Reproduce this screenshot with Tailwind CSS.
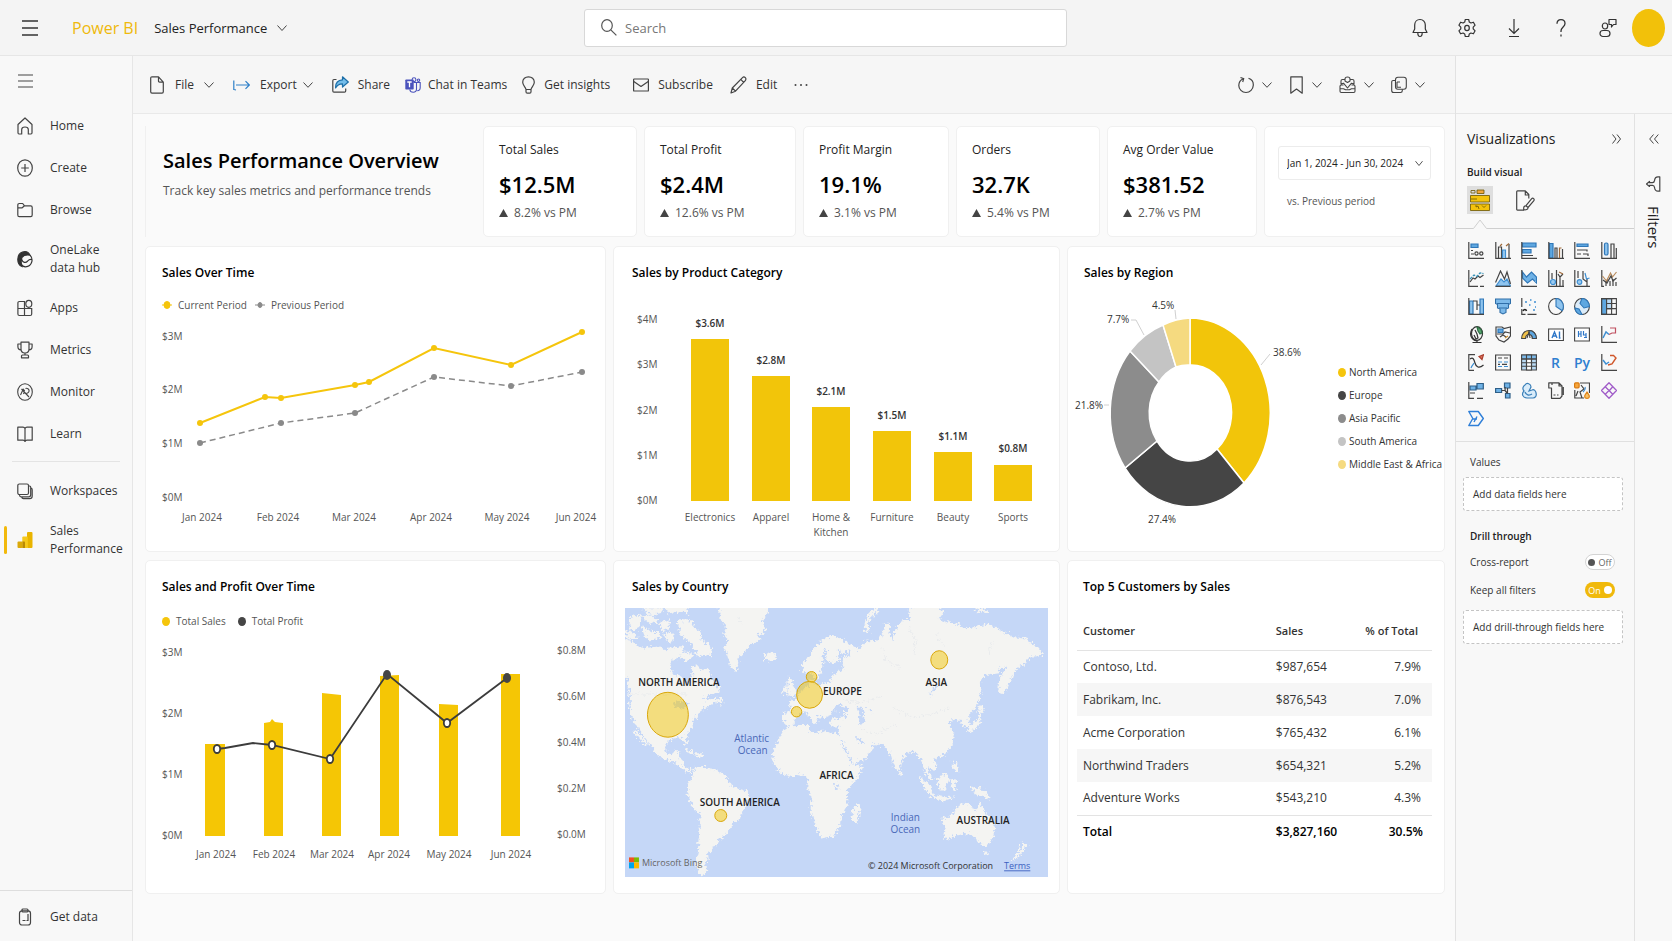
<!DOCTYPE html>
<html lang="en">
<head>
    <meta charset="UTF-8">
    <meta name="viewport" content="width=device-width, initial-scale=1.0">
    <title>Sales Performance - Power BI</title>
    <script src="https://cdn.jsdelivr.net/npm/@tailwindcss/browser@4"></script>
</head>
<body class="min-h-screen flex flex-col bg-[#fafafa] text-[#333] text-[12px] leading-5 font-['Open_Sans','Noto_Sans',sans-serif]">

    <!-- Top bar -->
    <header class="h-14 shrink-0 grid grid-cols-[584fr_483fr_605fr] items-center bg-[#f4f4f4] border-b border-[#e6e6e6]">
        <div class="flex items-center pl-[22px]">
            <button aria-label="App launcher">
                <svg class="w-4 h-4" viewBox="0 0 16 16" fill="none" stroke="#333" stroke-width="1.3"><path d="M0 1h16M0 8h16M0 15h16"/></svg>
            </button>
            <a href="#" class="ml-[34px] text-[16px] font-medium text-[#efb90b]">Power BI</a>
            <button class="ml-4 flex items-center gap-2.5 text-[13px] text-[#222]">
                Sales Performance
                <svg class="w-2.5 h-2" viewBox="0 0 10 8" fill="none" stroke="#444"><path d="M.5 1.5 5 6.5 9.5 1.5"/></svg>
            </button>
        </div>
        <div class="flex items-center h-[38px] px-4 gap-2 bg-white border border-[#d8d8d8] rounded-[3px]">
            <svg class="w-4 h-[17px] shrink-0" viewBox="0 0 16 17" fill="none" stroke="#555" stroke-width="1.2"><ellipse cx="6" cy="6.5" rx="5.3" ry="5.8"/><path d="m9.8 10.8 5.6 5.6"/></svg>
            <input type="search" aria-label="Search" placeholder="Search" class="w-full h-9 text-[13px] outline-none placeholder:text-[#777]">
        </div>
        <div class="flex items-center justify-end gap-[29px] pr-[7px]">
            <button aria-label="Notifications"><svg class="w-[18px] h-5" viewBox="0 0 18 20" fill="none" stroke="#333" stroke-width="1.2" stroke-linejoin="round"><path d="M9 1.5c-3.2 0-5.3 2.4-5.3 5.5v4L2 14.5h14L14.3 11V7c0-3.1-2.1-5.500-5.300-5.500zM6.800 14.800c0 2.400 1 3.700 2.200 3.700s2.200-1.300 2.200-3.700"/></svg></button>
            <button aria-label="Settings"><svg class="w-[18px] h-5" viewBox="0 0 18 20" fill="none" stroke="#333" stroke-width="1.2" stroke-linejoin="round"><path d="M7.300 1.500h3.400l.6 2.600 1.600.9 2.500-.8 1.700 3-1.900 1.900v1.800l1.900 1.900-1.700 3-2.500-.8-1.600.9-.6 2.600H7.300l-.6-2.600-1.600-.9-2.500.8-1.700-3 1.900-1.900V9.100L.9 7.200l1.700-3 2.500.8 1.600-.9z"/><ellipse cx="9" cy="10" rx="2.300" ry="2.600"/></svg></button>
            <button aria-label="Download"><svg class="w-[18px] h-5" viewBox="0 0 18 20" fill="none" stroke="#333" stroke-width="1.2"><path d="M9 1v14M4 10.500 9 15.500l5-5M4 18.500h10"/></svg></button>
            <button aria-label="Help"><svg class="w-[18px] h-5" viewBox="0 0 18 20" fill="none" stroke="#333" stroke-width="1.3"><path d="M5 5.800C5 3 6.700 1.600 9 1.600s4 1.500 4 3.900c0 3.300-4 3.700-4 7.500v1"/><path d="M9 16.500v2"/></svg></button>
            <button aria-label="Feedback"><svg class="w-[18px] h-5" viewBox="0 0 18 20" fill="none" stroke="#333" stroke-width="1.2"><ellipse cx="6" cy="8" rx="2.700" ry="3"/><rect x="1" y="12.500" width="10" height="6" rx="3"/><path d="M10 1.500h7v5h-2.500L12.500 9V6.500H10z" stroke-linejoin="round"/></svg></button>
            <button aria-label="Account" class="-ml-3.5 w-[33px] h-[38px] rounded-[50%] bg-[#f2c10a]"></button>
        </div>
    </header>

    <div class="grow flex">
        <!-- Left navigation -->
        <nav class="w-[133px] shrink-0 flex flex-col bg-[#f8f8f8] border-r border-[#e6e6e6]">
            <button aria-label="Collapse navigation" class="h-[49px] pl-[18px]">
                <svg class="w-[15px] h-3.5" viewBox="0 0 15 14" fill="none" stroke="#444" stroke-width="1.2"><path d="M0 1h15M0 7h15M0 13h15"/></svg>
            </button>
            <a href="#" class="h-[42px] flex items-center gap-[17px] pl-[17px]">
                <svg class="w-4 h-[18px]" viewBox="0 0 16 18" fill="none" stroke="#444" stroke-width="1.2" stroke-linejoin="round"><path d="M1 7.500 8 1l7 6.500v8.300c0 .7-.4 1.200-1 1.200h-2.700v-4.500c0-1.500-1.200-2.500-3.300-2.500s-3.300 1-3.300 2.500V17H2c-.6 0-1-.5-1-1.200z"/></svg>
                Home
            </a>
            <a href="#" class="h-[42px] flex items-center gap-[17px] pl-[17px]">
                <svg class="w-4 h-[18px]" viewBox="0 0 16 18" fill="none" stroke="#444" stroke-width="1.2"><ellipse cx="8" cy="9" rx="7.300" ry="8.200"/><path d="M8 5v8M4.200 9h7.600"/></svg>
                Create
            </a>
            <a href="#" class="h-[42px] flex items-center gap-[17px] pl-[17px]">
                <svg class="w-4 h-[18px]" viewBox="0 0 16 18" fill="none" stroke="#444" stroke-width="1.2" stroke-linejoin="round"><path d="M.8 4.200c0-1 .6-1.700 1.500-1.700h3.400l1.800 2.300h6.200c.9 0 1.500.6 1.500 1.600v7.500c0 1-.6 1.700-1.500 1.700H2.300c-.9 0-1.500-.7-1.500-1.700zM.8 6.800h4.400l2.300-2"/></svg>
                Browse
            </a>
            <a href="#" class="h-14 flex items-center gap-[17px] pl-[17px] leading-[18px]">
                <svg class="w-4 h-[18px] shrink-0" viewBox="0 0 16 18" fill="none" stroke="#333" stroke-width="1.2"><path d="M8 1.500C3.500 2 .8 5 .8 9.500c0 3.500 1.600 6 4.200 7C3.800 13 3.500 10 5 7.500c1.400-2 4.500-3 8-2.300C12 3 10.500 1.500 8 1.500z" fill="#333"/><path d="M13 5.200c3.500 3.500 2.500 11.300-4.500 11.600-4 0-5.800-4-3.800-7.500 1 3.500 4 4 6 1.700 1.200-1.500 2.500-2 4.500-1.500"/></svg>
                <span>OneLake<br>data hub</span>
            </a>
            <a href="#" class="h-[42px] flex items-center gap-[17px] pl-[17px]">
                <svg class="w-4 h-[18px]" viewBox="0 0 16 18" fill="none" stroke="#444" stroke-width="1.2"><path d="M7.500 16.500V2.500h-5C1.400 2.500.9 3.200.9 4v11c0 .9.500 1.500 1.500 1.500h10.800c.9 0 1.500-.6 1.500-1.500V9.500H.9M7.500 4"/><ellipse cx="11.800" cy="4.800" rx="3" ry="3.500"/></svg>
                Apps
            </a>
            <a href="#" class="h-[42px] flex items-center gap-[17px] pl-[17px]">
                <svg class="w-4 h-[18px]" viewBox="0 0 16 18" fill="none" stroke="#444" stroke-width="1.2" stroke-linejoin="round"><path d="M4 1.200h8V8c0 2.500-1.500 4-4 4S4 10.500 4 8zM4 3H.9v2.500C.9 7.500 2 8.800 4 8.800M12 3h3.100v2.500c0 2-1.100 3.300-3.100 3.300M8 12v2M4.500 16.800V15c0-.6.4-1 1-1h5c.6 0 1 .4 1 1v1.800z"/></svg>
                Metrics
            </a>
            <a href="#" class="h-[42px] flex items-center gap-[17px] pl-[17px]">
                <svg class="w-4 h-[18px]" viewBox="0 0 16 18" fill="none" stroke="#444" stroke-width="1.1"><ellipse cx="8" cy="9" rx="7.300" ry="8.200"/><path d="m3.500 12 2.700-5.800 1.600 1.600M4.500 6l7.500 8M8.500 5.500c1.700-.6 3.600.4 3.600 2.200S10.500 10.300 9.600 10M6.500 11l1-2.500"/></svg>
                Monitor
            </a>
            <a href="#" class="h-[42px] flex items-center gap-[17px] pl-[17px]">
                <svg class="w-4 h-[18px]" viewBox="0 0 16 18" fill="none" stroke="#444" stroke-width="1.2" stroke-linejoin="round"><path d="M8 3.500v12M8 3.500C7.600 2.600 7 2.200 6 2.200H.8v13H6c1 0 1.600.4 2 1.300.4-.9 1-1.300 2-1.300h5.200v-13H10c-1 0-1.600.4-2 1.300z"/></svg>
                Learn
            </a>
            <hr class="mt-1.5 mb-2 mx-3 border-[#e4e4e4]">
            <a href="#" class="h-[42px] flex items-center gap-[17px] pl-[17px]">
                <svg class="w-4 h-[18px]" viewBox="0 0 16 18" fill="none" stroke="#444" stroke-width="1.2"><rect x=".8" y="2" width="10.700" height="10.500" rx="1.500"/><path d="M11.500 4h1c.8 0 1.200.5 1.200 1.300v7.500c0 1.200-.8 2-2 2H4c-.9 0-1.400-.6-1.500-1.800M13.700 6.200c1 0 1.500.6 1.500 1.500V14c0 1.600-1 2.700-2.500 2.700H6.500c-1 0-1.600-.6-1.700-1.600"/></svg>
                Workspaces
            </a>
            <a href="#" aria-current="page" class="h-14 flex items-center leading-[18px]">
                <span class="ml-1 w-[3px] h-7 rounded-sm bg-[#f2b90c]"></span>
                <svg class="ml-2.5 w-4 h-[18px] shrink-0" viewBox="0 0 16 18"><rect x="10" y="1" width="5.500" height="16" rx="1" fill="#e9b400"/><rect x="5.300" y="5.500" width="5.500" height="11.500" rx="1" fill="#f6c91c"/><path d="M5.300 10.500h2c.4 0 .7.300.7.700V17H5.300z" fill="#b98a05"/><rect x=".5" y="10.500" width="5" height="6.500" rx="1" fill="#dba90a"/></svg>
                <span class="ml-[17px]">Sales<br>Performance</span>
            </a>
            <a href="#" class="mt-auto h-[52px] flex items-center gap-[17px] pl-[17px] border-t border-[#dedede]">
                <svg class="w-4 h-[18px]" viewBox="0 0 16 18" fill="none" stroke="#444" stroke-width="1.2"><rect x="2.500" y="2.800" width="11" height="14.200" rx="2.500"/><rect x="5" y="1" width="6" height="3" rx="1"/><path d="M11 6v6.500H9.500M5.500 12.500h3"/></svg>
                Get data
            </a>
        </nav>

        <main class="grow min-w-0 flex flex-col">
            <!-- Report toolbar -->
            <div class="h-[58px] shrink-0 flex items-center bg-[#f6f6f6] border-b border-[#e9e9e9] pl-[17px] pr-[30px]">
                <button class="flex items-center">
                    <svg class="w-3.5 h-[18px]" viewBox="0 0 14 18" fill="none" stroke="#444" stroke-width="1.2" stroke-linejoin="round"><path d="M8.500.8H2C1.200.8.7 1.300.7 2.200v13.600c0 .9.500 1.400 1.300 1.400h10c.8 0 1.300-.5 1.300-1.400V6.200zM8.500.8v4.200c0 .8.400 1.200 1.200 1.200h3.600"/></svg>
                    <span class="ml-[11px]">File</span>
                    <svg class="ml-2.5 w-2.5 h-2" viewBox="0 0 10 8" fill="none" stroke="#444"><path d="M.5 1.500 5 6.300 9.500 1.500"/></svg>
                </button>
                <button class="ml-[19px] flex items-center">
                    <svg class="w-[17px] h-3.5" viewBox="0 0 17 14" fill="none" stroke="#2f80c8" stroke-width="1.2"><path d="M.8 2.500v9.500M3 7h13M12.500 3.200 16.300 7l-3.800 3.800M1 11.500l2 .5"/></svg>
                    <span class="ml-2.5">Export</span>
                    <svg class="ml-1.5 w-2.5 h-2" viewBox="0 0 10 8" fill="none" stroke="#444"><path d="M.5 1.500 5 6.300 9.500 1.500"/></svg>
                </button>
                <button class="ml-[19px] flex items-center gap-[9px]">
                    <svg class="w-[17px] h-[17px]" viewBox="0 0 17 17" fill="none" stroke="#444" stroke-width="1.2" stroke-linejoin="round"><path d="M4.500 3.500H2c-.8 0-1.200.4-1.200 1.200V15c0 .8.400 1.200 1.200 1.200h10.500c.8 0 1.200-.4 1.200-1.200v-2.500"/><path d="M10.500.8 16.300 6l-5.800 5V7.800C7 7.800 5 9 3.600 12c-.2-4.800 2.400-8 6.900-8.200z" fill="#74bdea" stroke="#1d6fa8"/></svg>
                    Share
                </button>
                <button class="ml-[15px] flex items-center gap-[7px]">
                    <svg class="w-4 h-4" viewBox="0 0 16 16" fill="none" stroke="#4b53bc" stroke-width="1.1"><path d="M8.500 5.500h6.700v5c0 2-1.200 3.200-3 3.200M11.500 5.500v6.500c0 2-1.500 3.200-3.300 3.200S5 14 4.800 12.500"/><circle cx="9" cy="2.700" r="1.900"/><circle cx="13.500" cy="3.200" r="1.200"/><rect x=".3" y="2.500" width="8.400" height="10" rx=".8" fill="#4b53bc" stroke="none"/><path d="M2.300 5h4.400M4.500 5v5.300" stroke="#fff" stroke-width="1.3"/></svg>
                    Chat in Teams
                </button>
                <button class="ml-[15px] flex items-center gap-[9px]">
                    <svg class="w-[13px] h-[18px]" viewBox="0 0 13 18" fill="none" stroke="#444" stroke-width="1.2"><path d="M4 13.500c-.3-2.500-3.300-4-3.300-7.300C.7 3 3.200.8 6.500.8s5.800 2.200 5.800 5.400c0 3.300-3 4.800-3.300 7.300zM4 13.500v2.200c0 .9.500 1.500 1.300 1.500h2.400c.8 0 1.300-.6 1.300-1.500v-2.200"/></svg>
                    Get insights
                </button>
                <button class="ml-[23px] flex items-center gap-[9px]">
                    <svg class="w-4 h-3.5" viewBox="0 0 16 14" fill="none" stroke="#444" stroke-width="1.2" stroke-linejoin="round"><rect x=".6" y="1" width="14.800" height="12" rx=".6"/><path d="m.8 3.500 7.200 5 7.200-5"/></svg>
                    Subscribe
                </button>
                <button class="ml-[17px] flex items-center gap-[9px]">
                    <svg class="w-[17px] h-[18px]" viewBox="0 0 17 18" fill="none" stroke="#444" stroke-width="1.2" stroke-linejoin="round"><path d="M1 17l1.300-5L12.500 1.600c.8-.8 2-.8 2.800 0s.8 2.200 0 3L5.500 15.200zM10.800 3.400l2.800 3M2.300 12l3.200 3.200"/></svg>
                    Edit
                </button>
                <button aria-label="More options" class="ml-[17px]"><svg class="w-3.5 h-1" viewBox="0 0 14 4" fill="#444"><circle cx="1.500" cy="2" r="1"/><circle cx="7" cy="2" r="1"/><circle cx="12.500" cy="2" r="1"/></svg></button>

                <div class="ml-auto flex items-center gap-[17px]">
                    <button aria-label="Reset" class="flex items-center gap-2">
                        <svg class="w-4 h-[18px]" viewBox="0 0 16 18" fill="none" stroke="#444" stroke-width="1.2"><path d="M10.500 2.300c3 1 5 3.700 4.800 7-.2 4-3.300 7.200-7.300 7.200S.8 13.300.8 9.500C.8 6.500 2.500 4 5.300 2.800M2.500 1.500l3.200 1.200-1 3.300"/></svg>
                        <svg class="w-2.5 h-2" viewBox="0 0 10 8" fill="none" stroke="#444"><path d="M.5 1.500 5 6.300 9.500 1.500"/></svg>
                    </button>
                    <button aria-label="Bookmarks" class="flex items-center gap-2">
                        <svg class="w-[15px] h-[18px]" viewBox="0 0 15 18" fill="none" stroke="#444" stroke-width="1.2" stroke-linejoin="round"><path d="M1.800.8h11.400v16.400L7.500 13l-5.700 4.200z"/></svg>
                        <svg class="w-2.5 h-2" viewBox="0 0 10 8" fill="none" stroke="#444"><path d="M.5 1.500 5 6.300 9.500 1.500"/></svg>
                    </button>
                    <button aria-label="View" class="flex items-center gap-2">
                        <svg class="w-[17px] h-[18px]" viewBox="0 0 17 18" fill="none" stroke="#444" stroke-width="1.1" stroke-linejoin="round"><path d="M6 3.500H3.500c-1 0-1.500.5-1.500 1.500v3l2.500-.8L8.500 12l4-4.800L15 8V5c0-1-.5-1.500-1.500-1.500H11M4.500 9H2.300C1.400 9 1 9.500 1 10.300v5c0 .8.400 1.200 1.300 1.200h12.400c.9 0 1.300-.4 1.300-1.200v-5c0-.8-.4-1.300-1.300-1.300h-2.200M1 12.800h3.500l2 1h4l2-1H16M6 5V3c0-1.300 1-2 2.500-2S11 1.700 11 3v2l-2.500 1.500z"/></svg>
                        <svg class="w-2.5 h-2" viewBox="0 0 10 8" fill="none" stroke="#444"><path d="M.5 1.500 5 6.300 9.500 1.500"/></svg>
                    </button>
                    <button aria-label="Copy" class="flex items-center gap-2">
                        <svg class="w-4 h-[18px]" viewBox="0 0 16 18" fill="none" stroke="#444" stroke-width="1.1"><rect x="4.500" y="1.300" width="10.800" height="12" rx="2.500"/><path d="M4.500 4.500H2.200C1.300 4.500.7 5.100.7 6v8.500c0 1.200.8 2 1.900 2h7c1 0 1.700-.7 1.700-1.700v-1.500M6 6h3M6 6v5.300h4"/></svg>
                        <svg class="w-2.5 h-2" viewBox="0 0 10 8" fill="none" stroke="#444"><path d="M.5 1.500 5 6.300 9.500 1.500"/></svg>
                    </button>
                </div>
            </div>

            <div class="pl-3 pr-2.5 pt-3 pb-12 flex flex-col gap-2">
                <!-- KPI row -->
                <section class="grid grid-cols-[331fr_154fr_152fr_146fr_144fr_150fr_181fr] gap-[7px] mb-px">
                    <div class="pl-[17px] pt-[21px] border-l border-[#f0f0f0]">
                        <h1 class="text-[20px] leading-7 font-semibold text-black whitespace-nowrap">Sales Performance Overview</h1>
                        <p class="mt-1.5 text-[#555] whitespace-nowrap">Track key sales metrics and performance trends</p>
                    </div>
                    <div class="px-[15px] py-[13px] bg-white border border-[#f0f0f0] rounded-[5px]">
                        <h2 class="text-[#222] whitespace-nowrap">Total Sales</h2>
                        <p class="mt-2 text-[22px] leading-8 font-semibold text-black">$12.5M</p>
                        <p class="mt-[3px] flex items-center gap-1.5 text-[#555] whitespace-nowrap"><svg class="w-[9px] h-2" viewBox="0 0 9 8" fill="#444"><path d="M4.500 0 9 8H0z"/></svg>8.2% vs PM</p>
                    </div>
                    <div class="px-[15px] py-[13px] bg-white border border-[#f0f0f0] rounded-[5px]">
                        <h2 class="text-[#222] whitespace-nowrap">Total Profit</h2>
                        <p class="mt-2 text-[22px] leading-8 font-semibold text-black">$2.4M</p>
                        <p class="mt-[3px] flex items-center gap-1.5 text-[#555] whitespace-nowrap"><svg class="w-[9px] h-2" viewBox="0 0 9 8" fill="#444"><path d="M4.500 0 9 8H0z"/></svg>12.6% vs PM</p>
                    </div>
                    <div class="px-[15px] py-[13px] bg-white border border-[#f0f0f0] rounded-[5px]">
                        <h2 class="text-[#222] whitespace-nowrap">Profit Margin</h2>
                        <p class="mt-2 text-[22px] leading-8 font-semibold text-black">19.1%</p>
                        <p class="mt-[3px] flex items-center gap-1.5 text-[#555] whitespace-nowrap"><svg class="w-[9px] h-2" viewBox="0 0 9 8" fill="#444"><path d="M4.500 0 9 8H0z"/></svg>3.1% vs PM</p>
                    </div>
                    <div class="px-[15px] py-[13px] bg-white border border-[#f0f0f0] rounded-[5px]">
                        <h2 class="text-[#222] whitespace-nowrap">Orders</h2>
                        <p class="mt-2 text-[22px] leading-8 font-semibold text-black">32.7K</p>
                        <p class="mt-[3px] flex items-center gap-1.5 text-[#555] whitespace-nowrap"><svg class="w-[9px] h-2" viewBox="0 0 9 8" fill="#444"><path d="M4.500 0 9 8H0z"/></svg>5.4% vs PM</p>
                    </div>
                    <div class="px-[15px] py-[13px] bg-white border border-[#f0f0f0] rounded-[5px]">
                        <h2 class="text-[#222] whitespace-nowrap">Avg Order Value</h2>
                        <p class="mt-2 text-[22px] leading-8 font-semibold text-black">$381.52</p>
                        <p class="mt-[3px] flex items-center gap-1.5 text-[#555] whitespace-nowrap"><svg class="w-[9px] h-2" viewBox="0 0 9 8" fill="#444"><path d="M4.500 0 9 8H0z"/></svg>2.7% vs PM</p>
                    </div>
                    <div class="px-[13px] pt-[19px] bg-white border border-[#f0f0f0] rounded-[5px]">
                        <div class="grid items-center">
                            <select aria-label="Date range" class="col-start-1 row-start-1 w-full h-[34px] pl-2 appearance-none border border-[#ececec] rounded-[3px] bg-white text-[10px] text-[#222]">
                                <option>Jan 1, 2024 - Jun 30, 2024</option>
                            </select>
                            <svg class="col-start-1 row-start-1 justify-self-end mr-2 w-2 h-[7px] pointer-events-none" viewBox="0 0 8 7" fill="none" stroke="#555"><path d="M.5 1.200 4 5.500 7.500 1.200"/></svg>
                        </div>
                        <p class="mt-[11px] pl-[9px] text-[10px] text-[#555]">vs. Previous period</p>
                    </div>
                </section>

                <section class="grid grid-cols-[461fr_447fr_378fr] gap-x-[7px] gap-y-2">
                    <!-- Sales over time -->
                    <article class="pl-4 pr-2 pt-4 pb-[17px] bg-white border border-[#f0f0f0] rounded-[5px]">
                        <h2 class="text-[12px] font-semibold text-black">Sales Over Time</h2>
                        <ul class="mt-3.5 flex gap-2 text-[10px] leading-4 text-[#555]">
                            <li class="flex items-center gap-1.5"><svg class="w-2.5 h-2" viewBox="0 0 10 8" fill="#f5c50c" stroke="#f5c50c"><path d="M0 4h10"/><ellipse cx="5" cy="4" rx="3" ry="3.500"/></svg>Current Period</li>
                            <li class="flex items-center gap-1.5"><svg class="w-2.5 h-2" viewBox="0 0 10 8" fill="#8a8a8a" stroke="#8a8a8a"><path d="M0 4h10"/><ellipse cx="5" cy="4" rx="2" ry="2.500"/></svg>Previous Period</li>
                        </ul>
                        <svg class="w-full text-[10px]" viewBox="0 0 435 221">
                            <g fill="#555">
                                <text x="0" y="27">$3M</text>
                                <text x="0" y="80">$2M</text>
                                <text x="0" y="134">$1M</text>
                                <text x="0" y="188">$0M</text>
                            </g>
                            <g fill="#555" text-anchor="middle">
                                <text x="40" y="208">Jan 2024</text>
                                <text x="116" y="208">Feb 2024</text>
                                <text x="192" y="208">Mar 2024</text>
                                <text x="269" y="208">Apr 2024</text>
                                <text x="345" y="208">May 2024</text>
                                <text x="414" y="208">Jun 2024</text>
                            </g>
                            <polyline points="38,130 119,110 193,100 272,64 349,73 420,59" fill="none" stroke="#8a8a8a" stroke-width="1.5" stroke-dasharray="6 4"/>
                            <g fill="#8a8a8a"><circle cx="38" cy="130" r="3"/><circle cx="119" cy="110" r="3"/><circle cx="193" cy="100" r="3"/><circle cx="272" cy="64" r="3"/><circle cx="349" cy="73" r="3"/><circle cx="420" cy="59" r="3"/></g>
                            <polyline points="38,110 103,84 119,85 193,72 207,69 272,35 349,52 420,19" fill="none" stroke="#f5c50c" stroke-width="2"/>
                            <g fill="#f5c50c"><circle cx="38" cy="110" r="3"/><circle cx="103" cy="84" r="3"/><circle cx="119" cy="85" r="3"/><circle cx="193" cy="72" r="3"/><circle cx="207" cy="69" r="3"/><circle cx="272" cy="35" r="3"/><circle cx="349" cy="52" r="3"/><circle cx="420" cy="19" r="3"/></g>
                        </svg>
                    </article>

                    <!-- Sales by product category -->
                    <article class="pl-[18px] pr-2 pt-4 bg-white border border-[#f0f0f0] rounded-[5px]">
                        <h2 class="text-[12px] font-semibold text-black">Sales by Product Category</h2>
                        <svg class="w-full text-[10px]" viewBox="0 0 419 260">
                            <g fill="#555">
                                <text x="5" y="40">$4M</text>
                                <text x="5" y="85">$3M</text>
                                <text x="5" y="131">$2M</text>
                                <text x="5" y="176">$1M</text>
                                <text x="5" y="221">$0M</text>
                            </g>
                            <g fill="#f2c50a">
                                <rect x="59" y="56" width="38" height="162"/>
                                <rect x="120" y="93" width="38" height="125"/>
                                <rect x="180" y="124" width="38" height="94"/>
                                <rect x="241" y="148" width="38" height="70"/>
                                <rect x="302" y="169" width="38" height="49"/>
                                <rect x="362" y="182" width="38" height="36"/>
                            </g>
                            <g fill="#333" text-anchor="middle" font-weight="600">
                                <text x="78" y="44">$3.6M</text>
                                <text x="139" y="81">$2.8M</text>
                                <text x="199" y="112">$2.1M</text>
                                <text x="260" y="136">$1.5M</text>
                                <text x="321" y="157">$1.1M</text>
                                <text x="381" y="169">$0.8M</text>
                            </g>
                            <g fill="#555" text-anchor="middle">
                                <text x="78" y="238">Electronics</text>
                                <text x="139" y="238">Apparel</text>
                                <text x="199" y="238">Home &amp;</text>
                                <text x="199" y="253">Kitchen</text>
                                <text x="260" y="238">Furniture</text>
                                <text x="321" y="238">Beauty</text>
                                <text x="381" y="238">Sports</text>
                            </g>
                        </svg>
                    </article>

                    <!-- Sales by region -->
                    <article class="pt-4 bg-white border border-[#f0f0f0] rounded-[5px]">
                        <h2 class="pl-4 text-[12px] font-semibold text-black">Sales by Region</h2>
                        <div class="flex text-[10px] text-[#333]">
                            <svg class="w-[262px] h-[260px] shrink-0" viewBox="0 0 262 260">
                                <g stroke="#fff" stroke-width="1.5">
                                    <path d="M122 35A81 95 0 0 1 176 200L149 166A40.500 47.500 0 0 0 122 82z" fill="#f2c50a"/>
                                    <path d="M176 200A81 95 0 0 1 57 185L89 158A40.500 47.500 0 0 0 149 166z" fill="#454545"/>
                                    <path d="M57 185A81 95 0 0 1 62 68L91 99A40.500 47.500 0 0 0 89 158z" fill="#8c8c8c"/>
                                    <path d="M62 68A81 95 0 0 1 95 42L108 84A40.500 47.500 0 0 0 91 99z" fill="#c4c4c4"/>
                                    <path d="M95 42A81 95 0 0 1 122 35V82A40.500 47.500 0 0 0 108 84z" fill="#f5da80"/>
                                </g>
                                <path d="M202 71l-9 11M63 37h5l8 15M107 27l1 9M36 122h5" fill="none" stroke="#d0d0d0"/>
                                <g fill="#333">
                                    <text x="84" y="26">4.5%</text>
                                    <text x="39" y="40">7.7%</text>
                                    <text x="205" y="73">38.6%</text>
                                    <text x="7" y="126">21.8%</text>
                                    <text x="80" y="240">27.4%</text>
                                </g>
                            </svg>
                            <ul class="pt-[78px] pl-2 leading-[23px] whitespace-nowrap">
                                <li class="flex items-center gap-[3px]"><span class="w-2 h-[9px] rounded-[50%] bg-[#f5c50c]"></span>North America</li>
                                <li class="flex items-center gap-[3px]"><span class="w-2 h-[9px] rounded-[50%] bg-[#454545]"></span>Europe</li>
                                <li class="flex items-center gap-[3px]"><span class="w-2 h-[9px] rounded-[50%] bg-[#8c8c8c]"></span>Asia Pacific</li>
                                <li class="flex items-center gap-[3px]"><span class="w-2 h-[9px] rounded-[50%] bg-[#c4c4c4]"></span>South America</li>
                                <li class="flex items-center gap-[3px]"><span class="w-2 h-[9px] rounded-[50%] bg-[#f5da80]"></span>Middle East &amp; Africa</li>
                            </ul>
                        </div>
                    </article>

                    <!-- Sales and profit over time -->
                    <article class="pl-4 pr-2 pt-4 pb-[17px] bg-white border border-[#f0f0f0] rounded-[5px]">
                        <h2 class="text-[12px] font-semibold text-black">Sales and Profit Over Time</h2>
                        <ul class="mt-4 flex gap-3 text-[10px] leading-4 text-[#555]">
                            <li class="flex items-center gap-1.5"><span class="w-2 h-[9px] rounded-[50%] bg-[#f5c50c]"></span>Total Sales</li>
                            <li class="flex items-center gap-1.5"><span class="w-2 h-[9px] rounded-[50%] bg-[#454545]"></span>Total Profit</li>
                        </ul>
                        <svg class="w-full text-[10px]" viewBox="0 0 435 247">
                            <g fill="#555">
                                <text x="0" y="27">$3M</text>
                                <text x="0" y="88">$2M</text>
                                <text x="0" y="149">$1M</text>
                                <text x="0" y="210">$0M</text>
                                <text x="395" y="25">$0.8M</text>
                                <text x="395" y="71">$0.6M</text>
                                <text x="395" y="117">$0.4M</text>
                                <text x="395" y="163">$0.2M</text>
                                <text x="395" y="209">$0.0M</text>
                            </g>
                            <g fill="#f5c605">
                                <path d="M43 115h20v92H43z"/>
                                <path d="M102 94l6-1 2-3 3 3 8 1v113h-19z"/>
                                <path d="M160 64l19 2v141h-19z"/>
                                <path d="M218 47l19-1v161h-19z"/>
                                <path d="M277 75l19 1v131h-19z"/>
                                <path d="M339 45h19v162h-19z"/>
                            </g>
                            <polyline points="55,120 63,119 91,114 110,116 168,130 225,45 285,94 345,49" fill="none" stroke="#3c3c3c" stroke-width="1.8"/>
                            <g fill="#fff" stroke="#3c3c3c" stroke-width="1.8">
                                <ellipse cx="55" cy="120" rx="3.200" ry="4"/>
                                <ellipse cx="110" cy="116" rx="3.200" ry="4"/>
                                <ellipse cx="168" cy="130" rx="3.200" ry="4"/>
                                <ellipse cx="285" cy="94" rx="3.200" ry="4"/>
                            </g>
                            <g fill="#454545"><ellipse cx="225" cy="46" rx="4" ry="5"/><ellipse cx="345" cy="49" rx="4" ry="5"/></g>
                            <g fill="#555" text-anchor="middle">
                                <text x="54" y="229">Jan 2024</text>
                                <text x="112" y="229">Feb 2024</text>
                                <text x="170" y="229">Mar 2024</text>
                                <text x="227" y="229">Apr 2024</text>
                                <text x="287" y="229">May 2024</text>
                                <text x="349" y="229">Jun 2024</text>
                            </g>
                        </svg>
                    </article>

                    <!-- Sales by country -->
                    <article class="px-[11px] pt-4 bg-white border border-[#f0f0f0] rounded-[5px]">
                        <h2 class="pl-[7px] text-[12px] font-semibold text-black">Sales by Country</h2>
                        <svg class="mt-[11px] w-full text-[10px]" viewBox="0 0 424 270">
                            <defs>
                                <filter id="coast" x="-5%" y="-5%" width="110%" height="110%">
                                    <feTurbulence type="fractalNoise" baseFrequency="0.12" numOctaves="3" seed="4"/>
                                    <feDisplacementMap in="SourceGraphic" scale="24" xChannelSelector="R" yChannelSelector="G"/>
                                </filter>
                            </defs>
                            <rect width="424" height="270" fill="#c5d7f7"/>
                            <g transform="translate(-15 -47) scale(.33333)" filter="url(#coast)">
                                <g fill="#f4f4f2" stroke="#f4f4f2" stroke-width="4" stroke-linejoin="round">
                                    <path d="M30 232L60 240 90 262 120 262 150 258 165 270 185 262 215 258 222 270 205 285 180 305 178 325 190 345 215 348 225 362 235 380 243 372 238 355 250 345 248 318 262 315 275 330 292 326 305 350 322 372 328 390 305 398 288 405 278 425 300 415 318 412 310 428 285 440 268 452 258 468 245 480 247 495 236 510 225 525 232 545 228 550 215 532 200 530 185 532 172 540 165 552 164 570 170 582 190 580 200 570 208 572 202 590 218 602 222 618 240 628 248 622 244 634 225 630 205 612 185 600 160 592 140 580 130 560 115 545 105 528 92 508 78 490 66 465 60 440 62 410 58 380 52 350 30 320z"/>
                                    <path d="M78 510l17 20 17 22-4 1-20-23-12-16zM322 425l8-13 10 13-5 5z"/>
                                    <path d="M62 170l28-5 2 15-14 25H60zM95 195l15 10 18 10h22l-2 17-28 4-15-14zM100 141h60l-10 14-30 5zM165 135h70l-3 20-32-3-25 3zM150 185l25-5 3 20-20 10zM98 168l30-3 14 14-22 8zM45 210l25 8 14 14-30 2zM212 285l22-12 16 14-20 12zM165 222l20-8 10 20-16 10z"/>
                                    <path d="M205 180h40l5 20 20 15 5 25 30 22-5 23-20-7-15 7-10-23-15-22-25-15z"/>
                                    <path d="M327 130h148l-5 35-15 10 10 35-25 15 15 10-35 15-15 22-20 18-3 28-7 12-13-18-7-27-10-25 15-20-15-18 5-27-15-20z"/>
                                    <path d="M466 283l19-6 15 3-2 12-16 8-14-6z"/>
                                    <path d="M228 568l22 4-2 4-20-5zM255 580h23l-2 5h-20z"/>
                                    <path d="M255 625L275 618 300 628 325 632 350 650 355 668 385 685 412 695 416 710 405 730 398 755 390 775 368 785 355 808 340 828 325 838 322 852 305 858 302 872 290 880 292 900 282 915 290 930 280 948 268 940 258 912 266 880 268 840 272 800 270 760 252 740 240 715 233 690 240 668 248 650z"/>
                                    <path d="M530 500L560 495 595 495 598 515 620 520 640 512 680 522 695 528 700 555 720 590 735 615 758 618 752 635 735 660 710 690 712 735 692 770 690 795 670 825 635 832 628 815 612 775 605 745 608 710 595 680 598 655 580 640 550 645 520 640 500 615 490 600 494 565 508 535 522 515z"/>
                                    <path d="M735 740l13-12 4 17-12 40-10-3-2-22z"/>
                                    <path d="M580 330L582 305 600 292 612 268 635 240 665 226 690 232 715 248 718 265 700 275 682 262 685 285 690 300 670 305 655 300 650 282 660 262 645 262 635 285 640 305 632 330 622 352 612 345 600 330 588 336z"/>
                                    <path d="M522 458L548 456 545 440 540 425 560 415 570 395 585 385 600 378 602 355 615 358 612 372 630 375 655 368 668 355 675 340 690 335 705 315 700 300 712 285 725 290 718 275 722 250 745 268 752 262 770 245 800 240 815 232 820 215 832 190 840 195 838 225 850 245 858 205 870 195 880 180 905 178 900 150 920 135 985 135 1000 155 985 175 1010 185 1045 190 1060 205 1100 200 1130 190 1160 200 1180 215 1220 232 1250 235 1285 262 1300 280 1280 285 1260 285 1250 305 1225 320 1210 340 1195 375 1180 400 1170 385 1172 355 1185 335 1195 315 1175 318 1165 335 1130 340 1110 365 1112 400 1100 435 1085 450 1075 470 1080 495 1065 495 1055 475 1035 475 1020 480 1020 500 1032 520 1028 550 1005 580 980 590 970 595 980 615 975 628 960 620 950 610 955 635 970 655 960 655 945 625 938 600 925 580 905 568 890 575 875 600 868 630 858 625 848 590 838 568 825 552 790 548 788 565 765 595 728 610 715 580 695 540 690 515 690 495 665 495 662 480 690 472 715 475 710 455 690 455 670 445 660 462 640 470 620 460 618 480 605 465 590 448 580 452 555 470 550 490 530 492 522 480z"/>
                                    <path d="M538 350l10 2-3 18 15 25-8 10-17-3 7-17-7-17zM522 380l10-5v17l-12 3zM588 450l22 32 12 2-8-20z"/>
                                    <path d="M800 141l-25 24-10 40 13 10-3-35 30-30zM1110 430l15 15-15 10zM1115 455l-5 35-25 22-10-7 25-20zM1100 141h20l12 10-28-2z"/>
                                    <path d="M932 650l28 25 12 25-7 5-20-25zM970 705l40 7 25-2-30 8-30-6zM985 655l25-15 8 15-10 30h-18zM1030 600l10 10 5 25-10-10zM1028 658l18 2-14 10 6 18-8-6zM1088 680l22 5 20 10 12 20-22-10-20-5zM872 632l5 8-5 4z"/>
                                    <path d="M1002 775L1030 765 1045 740 1065 732 1085 735 1090 748 1105 752 1112 728 1122 750 1135 765 1155 790 1150 830 1135 855 1115 850 1100 830 1075 815 1045 822 1015 835 1005 825 1008 800z"/>
                                    <path d="M1125 875h12l-7 10zM1240 848l12 10-12 17-5-7zM1235 872l-10 20-15 10 12-20z"/>
                                </g>
                                <g fill="#c5d7f7">
                                    <path d="M742 440l22 2-4 18 6 28-14 4-4-24zM668 447l20-16 32 12-8 10-22 2zM692 540l6-2 32 68-6 2zM742 528l26 18-8 4-20-14zM672 672l16-4 2 12-12 4zM780 446l10-2-2 14zM188 424l30-4 16 14-12 10-24-4zM960 400l22-28 4 4-22 28z"/>
                                </g>
                                <path d="M820 260l10 40 40 20M900 200l20 40-6 40M1000 250l-20-30M1150 240l-10 40M700 420l60 6 60-20M850 440l60 30 60-10 50-20M60 400h170M740 500l60 20 60-30M380 170l20 20" fill="none" stroke="#e9ebed" stroke-width="3"/>
                            </g>
                            <g fill="#f2c50a" fill-opacity=".5" stroke="#d9a70b">
                                <ellipse cx="43" cy="107" rx="20.500" ry="22.500"/>
                                <ellipse cx="185" cy="87" rx="13" ry="13.500"/>
                                <circle cx="187" cy="69" r="5.300"/>
                                <circle cx="172" cy="104" r="5.200"/>
                                <ellipse cx="315" cy="52" rx="8.500" ry="9.200"/>
                                <circle cx="96" cy="208" r="6"/>
                            </g>
                            <g fill="#222" font-weight="600" text-anchor="middle">
                                <text x="54" y="78">NORTH AMERICA</text>
                                <text x="218" y="87">EUROPE</text>
                                <text x="312" y="78">ASIA</text>
                                <text x="212" y="171">AFRICA</text>
                                <text x="115" y="198">SOUTH AMERICA</text>
                                <text x="359" y="217">AUSTRALIA</text>
                            </g>
                            <g fill="#4a68b8" text-anchor="middle">
                                <text x="127" y="134">Atlantic</text>
                                <text x="128" y="146">Ocean</text>
                                <text x="281" y="214">Indian</text>
                                <text x="281" y="226">Ocean</text>
                            </g>
                            <path d="M4 250h5v5H4z" fill="#f25022"/><path d="M9 250h5v5H9z" fill="#7fba00"/><path d="M4 255h5v6H4z" fill="#00a4ef"/><path d="M9 255h5v6H9z" fill="#ffb900"/>
                            <text x="17" y="259" fill="#666" font-size="9">Microsoft Bing</text>
                            <text x="369" y="262" text-anchor="end" fill="#333" font-size="9">© 2024 Microsoft Corporation</text>
                            <a href="#"><text x="380" y="262" fill="#3b5fc0" font-size="9" text-decoration="underline">Terms</text></a>
                        </svg>
                    </article>

                    <!-- Top customers -->
                    <article class="pl-[9px] pr-3 pt-4 bg-white border border-[#f0f0f0] rounded-[5px]">
                        <h2 class="pl-1.5 text-[12px] font-semibold text-black">Top 5 Customers by Sales</h2>
                        <table class="mt-4 w-full table-fixed">
                            <colgroup><col class="w-[56%]"><col class="w-[22%]"><col class="w-[22%]"></colgroup>
                            <thead>
                                <tr class="h-[37px] border-b border-[#e3e3e3] text-left text-[11px] text-[#333] whitespace-nowrap">
                                    <th class="pl-1.5 font-semibold">Customer</th>
                                    <th class="font-semibold">Sales</th>
                                    <th class="pr-3.5 font-semibold text-right">% of Total</th>
                                </tr>
                            </thead>
                            <tbody>
                                <tr class="h-[33px]"><td class="pl-1.5">Contoso, Ltd.</td><td>$987,654</td><td class="pr-[11px] text-right">7.9%</td></tr>
                                <tr class="h-[33px] bg-[#f6f6f6]"><td class="pl-1.5">Fabrikam, Inc.</td><td>$876,543</td><td class="pr-[11px] text-right">7.0%</td></tr>
                                <tr class="h-[33px]"><td class="pl-1.5">Acme Corporation</td><td>$765,432</td><td class="pr-[11px] text-right">6.1%</td></tr>
                                <tr class="h-[33px] bg-[#f6f6f6]"><td class="pl-1.5">Northwind Traders</td><td>$654,321</td><td class="pr-[11px] text-right">5.2%</td></tr>
                                <tr class="h-[33px]"><td class="pl-1.5">Adventure Works</td><td>$543,210</td><td class="pr-[11px] text-right">4.3%</td></tr>
                            </tbody>
                            <tfoot>
                                <tr class="h-[33px] border-t border-[#e3e3e3] text-black"><td class="pl-1.5 font-semibold">Total</td><td class="font-semibold">$3,827,160</td><td class="pr-[9px] font-semibold text-right">30.5%</td></tr>
                            </tfoot>
                        </table>
                    </article>
                </section>
            </div>
        </main>

        <!-- Side panes -->
        <div class="w-[217px] shrink-0 flex flex-col border-l border-[#e2e2e2] bg-[#f8f8f8]">
            <div class="h-[58px] shrink-0 border-b border-[#e6e6e6]"></div>
            <div class="grow flex">
                <aside class="w-[179px] shrink-0 border-r border-[#e2e2e2]">
                    <div class="flex items-center justify-between pt-[15px] pl-[11px] pr-[13px]">
                        <h2 class="text-[14px] font-medium text-[#222]">Visualizations</h2>
                        <button aria-label="Collapse visualizations"><svg class="w-[9px] h-2.5" viewBox="0 0 9 10" fill="none" stroke="#444"><path d="m.5.5 3.500 4.500L.5 9.500M5 .5 8.500 5 5 9.500"/></svg></button>
                    </div>
                    <h3 class="mt-[13px] pl-[11px] text-[10px] font-semibold text-[#222]">Build visual</h3>
                    <div class="mt-1 pl-[11px] flex items-center gap-[23px]">
                        <button aria-label="Build visual" class="w-[26px] h-7 flex items-center justify-center bg-[#dedede]">
                            <svg class="w-5 h-[22px]" viewBox="0 0 20 22" stroke="#6b5500" stroke-width=".8"><path d="M7 1h7v3.500H7z" fill="#f0a63a"/><path d="M.5 6.500h19v6.500H.5zM.5 15h19v6.500H.5z" fill="#f4c30c"/><path d="M1 1.500h4v2.500H1zM1 10h6M6 16v2l2-1 1 3M12 16.500l2 2 2-2" fill="none"/></svg>
                        </button>
                        <button aria-label="Format visual"><svg class="w-[19px] h-[21px]" viewBox="0 0 19 21" fill="none" stroke="#444" stroke-width="1.2" stroke-linejoin="round"><path d="M8 20.200H1.500c-.5 0-.8-.4-.8-.9V1.700c0-.5.300-.9.800-.9h7.800l3.500 3.700v4M9.300 1v4h3.500"/><path d="M17.500 8.500c.8.600.9 1.600.2 2.400L12 17.500l-2-1.800 5.500-6.800c.6-.7 1.400-.9 2-.4zM10 15.800c-1.800-.2-2.500 1-2.300 3.900 2.300.3 4.400-.2 4.300-2.200"/></svg></button>
                    </div>
                    <!-- Divider with the pointer under the active tab -->
                    <svg class="mt-[5px] w-full h-2.5" viewBox="0 0 178 10" fill="none" stroke="#cfcfcf"><path d="M0 9.500h17.500L24 1l6.500 8.500H178"/></svg>
                    <div class="mt-[13px] pl-3 pr-[7px] grid grid-cols-6 gap-y-[11px] [&_svg]:w-4 [&_svg]:h-[17px]">
                        <button aria-label="Stacked bar chart"><svg viewBox="0 0 16 17" fill="none" stroke="#444" stroke-width="1.2"><path d="M3 2h7v3.500H3z" fill="#5ea7e0" stroke="#2f77b8"/><path d="M.8 0v16.300H16M3 8.500h2M3 12h3"/><circle cx="8.500" cy="11.500" r="1.600"/><circle cx="13.300" cy="11.500" r="1.600"/></svg></button>
                        <button aria-label="Stacked column chart"><svg viewBox="0 0 16 17" fill="none" stroke="#444" stroke-width="1.2"><path d="M.8 0v16.300H16M3.500 16V5h3v11M14 16V2"/><path d="M7.500 16V8h3v8" stroke="#3f8fd2" fill="#9ccbf0"/><path d="M5 4l2-2M11 4l3-2.500" stroke="#a06a3a"/></svg></button>
                        <button aria-label="Clustered bar chart"><svg viewBox="0 0 16 17" fill="none" stroke="#444" stroke-width="1.2"><path d="M1.500 1H15v4H1.500zM1.500 7.500H10v3.500H1.500z" fill="#5ea7e0" stroke="#2f77b8"/><path d="M.8 0v16.300H16M1 13.500h11"/></svg></button>
                        <button aria-label="Clustered column chart"><svg viewBox="0 0 16 17" fill="none" stroke="#444" stroke-width="1.2"><path d="M1.500 1.500H5V16H1.500z" fill="#5ea7e0" stroke="#2f77b8"/><path d="M.8 0v16.300H16M7 16V6h2v10M14.500 16V7"/><path d="M11.500 16V6h2" stroke="#a06a3a"/></svg></button>
                        <button aria-label="100% stacked bar chart"><svg viewBox="0 0 16 17" fill="none" stroke="#444" stroke-width="1.2"><path d="M3 2h11v2.500H3z" fill="#5ea7e0" stroke="#2f77b8"/><path d="M.8 0v16.300H16M3 8h10v1.500M3 12h4M9 12h5v2"/></svg></button>
                        <button aria-label="100% stacked column chart"><svg viewBox="0 0 16 17" fill="none" stroke="#444" stroke-width="1.2"><rect x="3.500" y="1" width="3.500" height="12" rx="1.500" fill="#8fc4ee" stroke="#2f77b8"/><path d="M.8 0v16.300H16M10 16V2h3v14M15.300 6v10"/></svg></button>

                        <button aria-label="Line chart"><svg viewBox="0 0 16 17" fill="none" stroke="#444" stroke-width="1.2"><path d="M.8 0v16.300H10M12 16.300h4"/><path d="m2 12 3-4 2 1 3-3 2 1.500L15.500 5"/><path d="m2 9 4-4 3 1.500L12 3l3.500.5" stroke="#3a93b8" stroke-dasharray="3 1"/></svg></button>
                        <button aria-label="Area chart"><svg viewBox="0 0 16 17" fill="none" stroke="#444" stroke-width="1.2"><path d="M1 16 6 9l3 3 3-3 3.500 7z" fill="#8fc4ee" stroke="#3f8fd2"/><path d="M.5 12.500 5.500 1l4 8L12 2l3.500 12M.5 16.300h15"/></svg></button>
                        <button aria-label="Stacked area chart"><svg viewBox="0 0 16 17" fill="none" stroke="#444" stroke-width="1.2"><path d="m1.500 2 4 5 5-5 5 5v6l-4-4-5 4-5-5z" fill="#6fb2e6" stroke="#2f77b8"/><path d="M.8 0v16.300H16"/></svg></button>
                        <button aria-label="Line and stacked column chart"><svg viewBox="0 0 16 17" fill="none" stroke="#444" stroke-width="1.2"><path d="M.8 0v16.300H16M8.500 0v16M12 16V7M15 4l-3 3-2-3M4 3v6M15 10v6"/><circle cx="5" cy="12" r="2.500" stroke="#3f8fd2" fill="#9ccbf0"/><path d="m11 2 4 2" stroke="#a06a3a"/></svg></button>
                        <button aria-label="Line and clustered column chart"><svg viewBox="0 0 16 17" fill="none" stroke="#444" stroke-width="1.2"><path d="M.8 0v16.300H16M4 1v7M9 1v8l4 3M13 16V8"/><circle cx="5.500" cy="12" r="2.300" stroke="#3f8fd2" fill="#9ccbf0"/><path d="m11 3 1.500 6 3-1" stroke="#3f8fd2"/></svg></button>
                        <button aria-label="Ribbon chart"><svg viewBox="0 0 16 17" fill="none" stroke="#444" stroke-width="1.2"><path d="M.8 0v16.300H3M5 16v-4l2-3M9 16v-5M12 16V9M15 16v-4"/><path d="m1.500 6 4 5 4-8 2 4 4-5" stroke="#b98a5a"/><path d="m2 10 4 3 4-7 2 5 3.500-3"/></svg></button>

                        <button aria-label="Waterfall chart"><svg viewBox="0 0 16 17" fill="none" stroke="#444" stroke-width="1.2"><path d="M1.500 3H5v13H1.500zM12 1h3.500v15H12z" fill="#8fc4ee" stroke="#2f77b8"/><path d="M.8 0v16.300H16M5 3h4v9M9 7h3"/></svg></button>
                        <button aria-label="Funnel"><svg viewBox="0 0 16 17" stroke="#2f6ea8" stroke-width="1.1"><path d="M.5 1h15v4.500l-2 1V10l-2.500 1v3.500L8 16l-3-1.500V11L2.500 10V6.500l-2-1z" fill="#7dbaea"/><path d="M2 5.500h12M4 10h8" fill="none"/></svg></button>
                        <button aria-label="Scatter chart"><svg viewBox="0 0 16 17" fill="none" stroke="#3f8fd2" stroke-width="1.6"><path d="M.8 0v16.300H16" stroke="#444" stroke-width="1.2" stroke-dasharray="9 2"/><path d="M4 4h2M9 2h1.500M8 7h1.500M13 4h2M12 12h2M14 9h1"/><path d="M2 13c1-2 3-2 3.500 0" stroke="#222"/></svg></button>
                        <button aria-label="Pie chart"><svg viewBox="0 0 16 17" fill="none" stroke="#444" stroke-width="1.1"><ellipse cx="8" cy="8.500" rx="7.400" ry="8"/><path d="M8 .5c4 0 7.400 3.600 7.400 8 0 1.700-.5 3-1.200 4.200L8 8.500z" fill="#8fc4ee" stroke="#2f77b8"/></svg></button>
                        <button aria-label="Donut chart"><svg viewBox="0 0 16 17" fill="none" stroke="#444" stroke-width="1.1"><ellipse cx="8" cy="8.500" rx="7.400" ry="8" fill="#dcecf9"/><path d="M8 .5c4 0 7.400 3.600 7.400 8L10 10 6 5.500zM1 10l4 1 3 5.500C4 16.500 1.500 14 1 10z" fill="#5ea7e0" stroke="#2f77b8"/></svg></button>
                        <button aria-label="Treemap"><svg viewBox="0 0 16 17" fill="none" stroke="#444" stroke-width="1.1"><path d="M.6.6h5v15.800h-5z" fill="#5ea7e0"/><path d="M5.600.6h5v10h-5z" fill="#b9daf4"/><path d="M.6.6h14.800v15.800H.6zM5.600 5.500h9.800M5.600 10.600h9.800M10.600.6v15.800"/></svg></button>

                        <button aria-label="Map"><svg viewBox="0 0 16 17" fill="none" stroke="#333" stroke-width="1.2"><ellipse cx="9" cy="7.500" rx="5.500" ry="6.800"/><path d="M9 1c3 1 5 3 5 6l-2 1-2-3z" fill="#57a36c" stroke="#2f6e44"/><path d="M7 4l2 4 1 4-2 1-2-4M4 3C1 8 3 14 9 15v1.500M4.500 16.500h9"/></svg></button>
                        <button aria-label="Filled map"><svg viewBox="0 0 16 17" fill="none" stroke="#444" stroke-width="1.2"><path d="M1 1h6l2 1.500L15.500 1v9L13 13l-4 3-5-2-3-4z"/><path d="M3 3h5v3.500H3z" fill="#5ea7e0" stroke="#2f77b8"/><path d="M2 8h6l2-2 5 1M5 11l3-2 3 2"/><path d="M10 12l3-2" stroke="#c98c2a"/></svg></button>
                        <button aria-label="Gauge"><svg viewBox="0 0 16 17" fill="none" stroke="#444" stroke-width="1.1"><path d="M.6 12.500C.6 8 3.500 4.500 8 4.500s7.400 3.500 7.400 8h-4C11.400 10 10 8.500 8 8.500s-3.400 1.500-3.400 4z" fill="#f0c14a"/><path d="M8 4.500c4.500 0 7.400 3.500 7.400 8h-4C11.400 10 10 8.500 8 8.500z" fill="#5ea7e0"/><path d="m6 12 2-6 1 6"/></svg></button>
                        <button aria-label="Card"><svg viewBox="0 0 16 17" fill="none" stroke="#444" stroke-width="1.1"><path d="M.6 3h14.800v11.500H.6z" fill="#fff"/><path d="m4 12 2.500-6L9 12M5 10h3M11.500 5.500V12h1" stroke="#2f77c8" stroke-width="1.4"/></svg></button>
                        <button aria-label="Multi-row card"><svg viewBox="0 0 16 17" fill="none" stroke="#444" stroke-width="1.1"><path d="M.6 2h14.800v13H.6z" fill="#fff"/><path d="M4.500 5v6M7 5v6M4.500 8H7M9.500 5v4h3M10 11.500h3M12 7v5" stroke="#2f77c8" stroke-width="1.2"/></svg></button>
                        <button aria-label="KPI"><svg viewBox="0 0 16 17" fill="none" stroke="#444" stroke-width="1.2"><path d="M.8 0v16.300H16"/><path d="m2 12 3-6 3 2.500" stroke="#3f8fd2" stroke-width="1.5"/><path d="m8 8.500 3-1.500h3.500V2H9" stroke="#c05060"/></svg></button>

                        <button aria-label="Slicer"><svg viewBox="0 0 16 17" fill="none" stroke="#444" stroke-width="1.2"><path d="M.8 16.500V.7H7M.8 16.300H6"/><path d="M2 5c3-2 4 0 5 4s4 6 8.500 2" stroke="#333"/><path d="M3 14c1-3 2-3 3-5" stroke="#3f8fd2"/><path d="M11 2.500 15.500.7 14 5.500z" fill="#e0705a" stroke="#a94030"/></svg></button>
                        <button aria-label="Table"><svg viewBox="0 0 16 17" fill="none" stroke="#444" stroke-width="1.2"><path d="M.6 1h14.800v15H.6z"/><path d="M3 8h4M9 8h4M3 12.500h4M9 12.500h4" stroke="#3f8fd2"/><path d="M3 4h4M9 4h4M3 10.300h2M7 10.300h5"/></svg></button>
                        <button aria-label="Matrix"><svg viewBox="0 0 16 17" fill="none" stroke="#444" stroke-width="1.1"><path d="M.6 1h14.800v15H.6z" fill="#b9daf4"/><path d="M5.500 1h5v15h-5z" fill="#fff"/><path d="M.6 1h14.800v4H.6z" fill="#7dbaea"/><path d="M.6 5h14.800M.6 8.700h14.800M.6 12.300h14.800M5.500 1v15M10.500 1v15"/></svg></button>
                        <button class="w-4 h-[17px] leading-[17px] text-[14px] font-semibold text-[#2f7fd0]">R</button>
                        <button class="w-4 h-[17px] leading-[17px] text-[14px] font-semibold text-[#2f7fd0]">Py</button>
                        <button aria-label="Key influencers"><svg viewBox="0 0 16 17" fill="none" stroke="#444" stroke-width="1.2"><path d="M.8 0v16.300H16"/><path d="m2 6 3 4 3-2" stroke="#3f8fd2" stroke-width="1.5"/><path d="m7 11 4-1 4-6-2.500-2.500H9" stroke="#d0562a" stroke-width="1.4"/></svg></button>

                        <button aria-label="Decomposition tree"><svg viewBox="0 0 16 17" fill="none" stroke="#444" stroke-width="1.2"><path d="M2 4h6v4H2zM9 1.500h6.300V7H9z" fill="#6fb2e6" stroke="#2f5f88"/><path d="M.8 0v16.300H6M9 16.300h6M2 11h5"/></svg></button>
                        <button aria-label="Q&amp;A"><svg viewBox="0 0 16 17" fill="none" stroke="#444" stroke-width="1.2"><path d="M.6 6.500h6v4h-6zM9.500 1h5.500v5H9.500zM10.500 11.500h4.500V16h-4.500z" fill="#6fb2e6" stroke="#2f5f88"/><path d="M6.600 8.500h3.500V5M10 8.500l2.500 3M12.500 6v5"/></svg></button>
                        <button aria-label="Smart narrative"><svg viewBox="0 0 16 17" fill="none" stroke="#3a7fb8" stroke-width="1.2"><path d="M4 3c2-3 6-1 6 2l-2 4 3-1c2-1 4 1 4 3 1 3-1 5-3 5H6c-4 0-6-4-3-7-2-2-1-5 1-6z" fill="#d9ecfa"/><path d="M4 10c1 3 4 4 7 2"/></svg></button>
                        <button aria-label="Paginated report"><svg viewBox="0 0 16 17" fill="none" stroke="#444" stroke-width="1.2" stroke-linejoin="round"><path d="M4 3V.8h7l3 3V14l-2 2.300H3.500V6H.8V.8H4M11 .8V4h3M5.500 13h2M9 13h1.500M15.300 5v8"/></svg></button>
                        <button aria-label="ArcGIS map"><svg viewBox="0 0 16 17" fill="none" stroke="#444" stroke-width="1.2"><path d="M6 1h9.500v10M.8 8v8H10M7 3l3 4-4 3 2 6M4 9l-2 5"/><rect x=".6" y=".8" width="4.500" height="5" rx="1" fill="#f7a73c" stroke="#d97a12"/><path d="M13 10c1.500 2 2.300 3 2.300 4.300S14.300 16.400 13 16.400s-2.300-.8-2.300-2.100S11.500 12 13 10z" fill="#f7c36c" stroke="#e0861a"/><path d="M11 5c1 2 0 3-2 5" stroke="#3f8fd2"/></svg></button>
                        <button aria-label="Power Apps"><svg viewBox="0 0 16 17" fill="none" stroke="#a05cc8" stroke-width="1.3" stroke-linejoin="round"><path d="m8 .8 7.500 7.700L8 16.200.5 8.500zM4.500 5l7 7M11.500 5l-3 3.500M4.300 12.200 8 8.500"/></svg></button>

                        <button aria-label="Power Automate"><svg viewBox="0 0 16 17" fill="none" stroke="#2f7fd8" stroke-width="1.4" stroke-linejoin="round"><path d="M.8 1.500h9.500l5 7-5 7H.8l4-7zM5 9h4M9 6.500 6 12"/></svg></button>
                    </div>

                    <div class="mt-3.5 pl-[7px] pr-[11px] border-t border-[#e0e0e0] text-[10px]">
                        <h3 class="mt-2.5 pl-[7px] text-[#333]">Values</h3>
                        <div class="mt-[5px] h-[34px] flex items-center pl-[9px] bg-white border border-dashed border-[#c4c4c4] rounded-[3px] whitespace-nowrap">Add data fields here</div>
                        <h3 class="mt-[15px] pl-[7px] font-semibold text-[#222]">Drill through</h3>
                        <label class="mt-1.5 pl-[7px] pr-2 flex items-center justify-between">
                            Cross-report
                            <input type="checkbox" role="switch" class="peer sr-only">
                            <span class="w-[30px] h-4 flex items-center justify-center gap-[3px] rounded-full border border-[#d4d4d4] bg-white text-[9px] leading-none text-[#666]"><span class="size-[7px] rounded-full bg-[#555]"></span>Off</span>
                        </label>
                        <label class="mt-2 pl-[7px] pr-2 flex items-center justify-between">
                            Keep all filters
                            <input type="checkbox" role="switch" checked class="peer sr-only">
                            <span class="w-[30px] h-4 flex items-center justify-center gap-[3px] rounded-full bg-[#f0b90b] text-[9px] leading-none text-white">On<span class="size-2 rounded-full bg-white"></span></span>
                        </label>
                        <div class="mt-2.5 h-[34px] flex items-center pl-[9px] bg-white border border-dashed border-[#c4c4c4] rounded-[3px] whitespace-nowrap">Add drill-through fields here</div>
                    </div>
                </aside>
                <aside class="grow flex flex-col items-center pt-5">
                    <button aria-label="Expand filters"><svg class="w-2.5 h-2.5" viewBox="0 0 10 10" fill="none" stroke="#444"><path d="M4.500.5.700 5l3.800 4.500M9.300.5 5.500 5l3.800 4.500"/></svg></button>
                    <svg class="mt-8 w-[15px] h-4" viewBox="0 0 15 16" fill="none" stroke="#444" stroke-width="1.2" stroke-linejoin="round"><path d="M.5 8 3.500 5.500v1.200h3c1.200 0 1.800-.6 2-2C8.700 2.300 10 .8 12 .8h1.800v14.400H12c-2 0-3.300-1.500-3.500-3.900-.2-1.400-.8-2-2-2h-3v1.200z"/></svg>
                    <h2 class="mt-3.5 [writing-mode:vertical-rl] text-[15px] font-medium text-[#222]">Filters</h2>
                </aside>
            </div>
        </div>
    </div>

    <script>
        // Keep the drill-through switches in step with their checkboxes
        document.querySelectorAll('[role="switch"]').forEach(input => {
            input.addEventListener('change', () => {
                input.setAttribute('aria-checked', input.checked);
            });
        });
    </script>
</body>
</html>
